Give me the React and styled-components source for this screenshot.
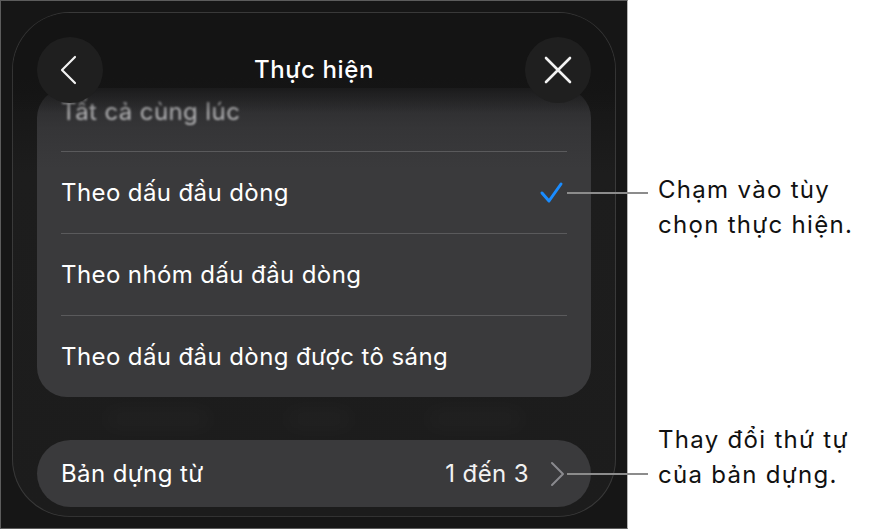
import styled, { createGlobalStyle } from 'styled-components';

const Global = createGlobalStyle`
  html, body {
    margin: 0;
    padding: 0;
    background: #ffffff;
  }
  body {
    font-family: Inter, "Noto Sans", "Liberation Sans", sans-serif;
  }
`;

const ROWS = [
  { label: 'Theo dấu đầu dòng', checked: true },
  { label: 'Theo nhóm dấu đầu dòng' },
  { label: 'Theo dấu đầu dòng được tô sáng' },
];

export default function App() {
  return (
    <Page>
      <Global />
      <Frame>
        <Sheet>
          <Header>
            <RoundButton aria-label="Quay lại">
              <svg width="66" height="66" viewBox="0 0 66 66">
                <path d="M38 20 L25 33 L38 46" fill="none" stroke="#f2f2f2" strokeWidth="2.2" strokeLinecap="round" strokeLinejoin="round" />
              </svg>
            </RoundButton>
            <Title>Thực hiện</Title>
            <RoundButton aria-label="Đóng">
              <svg width="66" height="66" viewBox="0 0 66 66">
                <path d="M21 21 L45 45 M45 21 L21 45" fill="none" stroke="#f2f2f2" strokeWidth="2.6" strokeLinecap="round" />
              </svg>
            </RoundButton>
          </Header>

          <Card>
            <FadedRow>Tất cả cùng lúc</FadedRow>
            {ROWS.map((r) => (
              <Row key={r.label}>
                <span>{r.label}</span>
                {r.checked && (
                  <svg width="26" height="24" viewBox="0 0 26 24">
                    <path d="M3 12 L10 20 L22 3" fill="none" stroke="#1a8cff" strokeWidth="3" strokeLinecap="round" strokeLinejoin="round" />
                  </svg>
                )}
              </Row>
            ))}
          </Card>

          <BlurBand>
            <Ghost $w={110} />
            <Ghost $w={70} />
            <Ghost $w={100} />
          </BlurBand>

          <Pill>
            <span>Bản dựng từ</span>
            <Value>
              1 đến 3
              <svg width="16" height="26" viewBox="0 0 16 26">
                <path d="M3 2 L14 13 L3 24" fill="none" stroke="#8a8a8e" strokeWidth="2" strokeLinecap="round" strokeLinejoin="round" />
              </svg>
            </Value>
          </Pill>
        </Sheet>
      </Frame>

      <Callout $top={172}>
        <Leader $offset={20} />
        <Note>Chạm vào tùy<br />chọn thực hiện.</Note>
      </Callout>
      <Callout $top={422}>
        <Leader $offset={51} />
        <Note>Thay đổi thứ tự<br />của bản dựng.</Note>
      </Callout>
    </Page>
  );
}

const Page = styled.div`
  position: relative;
  width: 875px;
  height: 529px;
  display: flex;
`;

const Frame = styled.div`
  box-sizing: border-box;
  width: 628px;
  height: 529px;
  padding: 11px;
  background: #161616;
  border: 1px solid #5c5c5c;
  border-right-color: #b4b4b4;
`;

const Sheet = styled.div`
  position: relative;
  box-sizing: border-box;
  height: 100%;
  display: flex;
  flex-direction: column;
  padding: 75px 24px 0;
  border: 1px solid rgba(255, 255, 255, 0.13);
  border-radius: 58px;
  background: linear-gradient(to bottom, #141414 0, #161616 80px, #1d1d1d 160px, #1c1c1c 100%);
  overflow: hidden;
`;

const Header = styled.div`
  position: absolute;
  top: 0;
  left: 0;
  right: 0;
  height: 100px;
  padding: 24px 24px 0;
  box-sizing: border-box;
  display: flex;
  align-items: flex-start;
  justify-content: space-between;
  z-index: 2;
  background: linear-gradient(
    to bottom,
    #141414 0,
    #141414 64px,
    rgba(20, 20, 20, 0.45) 82px,
    rgba(20, 20, 20, 0) 100px
  );
`;

const RoundButton = styled.div`
  width: 66px;
  height: 66px;
  border-radius: 50%;
  background: #1f1f1f;
  display: flex;
  align-items: center;
  justify-content: center;
`;

const Title = styled.div`
  height: 66px;
  line-height: 66px;
  font-size: 24px;
  font-weight: 500;
  letter-spacing: 0.6px;
  color: #ffffff;
`;

const Card = styled.div`
  background: linear-gradient(to bottom, #29292b 0, #353537 40px, #3a3a3c 80px, #3a3a3c 100%);
  border-radius: 30px;
  display: flex;
  flex-direction: column;
  font-size: 24px;
  letter-spacing: 0.4px;
`;

const FadedRow = styled.div`
  height: 63px;
  padding: 0 24px 25px;
  box-sizing: border-box;
  display: flex;
  align-items: flex-end;
  color: #b4b4b6;
  filter: blur(1px);
`;

const Row = styled.div`
  height: 82px;
  margin: 0 24px;
  border-top: 1px solid #5a5a5c;
  box-sizing: border-box;
  display: flex;
  align-items: center;
  justify-content: space-between;
  color: #ffffff;
  svg {
    margin-right: 2px;
  }
`;

const BlurBand = styled.div`
  height: 43px;
  display: flex;
  align-items: center;
  justify-content: space-around;
  padding: 0 30px;
  filter: blur(10px);
`;

const Ghost = styled.div`
  width: ${(p) => p.$w}px;
  height: 20px;
  border-radius: 10px;
  background: rgba(255, 255, 255, 0.025);
`;

const Pill = styled.div`
  height: 67px;
  border-radius: 34px;
  background: #3a3a3c;
  padding: 0 26px 0 24px;
  display: flex;
  align-items: center;
  justify-content: space-between;
  font-size: 24px;
  letter-spacing: 0.4px;
  color: #ffffff;
`;

const Value = styled.div`
  display: flex;
  align-items: center;
  gap: 20px;
  color: #f2f2f2;
`;

const Callout = styled.div`
  position: absolute;
  top: ${(p) => p.$top}px;
  left: 567px;
  display: flex;
  align-items: flex-start;
  gap: 10px;
`;

const Leader = styled.div`
  width: 81px;
  height: 2px;
  margin-top: ${(p) => p.$offset}px;
  background: #8c8c8c;
`;

const Note = styled.div`
  font-family: Inter, "Noto Sans", "Liberation Sans", sans-serif;
  font-size: 24px;
  letter-spacing: 1.3px;
  line-height: 35px;
  color: #111111;
`;
